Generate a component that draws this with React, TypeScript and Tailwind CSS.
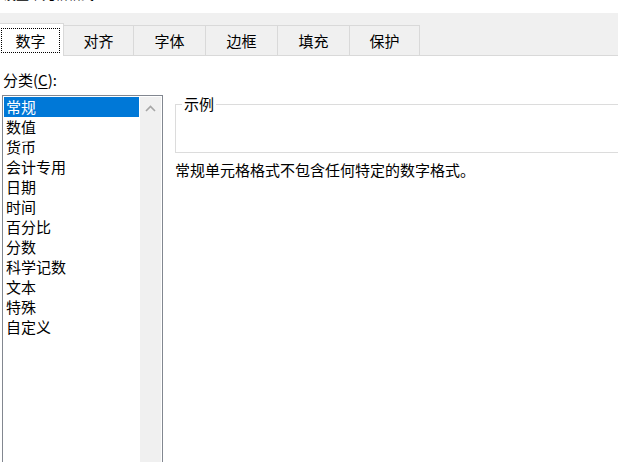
import { useState } from 'react';

const tabs = [
  { label: '数字', w: 'w-[64px]' },
  { label: '对齐', w: 'w-[70px]' },
  { label: '字体', w: 'w-[72px]' },
  { label: '边框', w: 'w-[72px]' },
  { label: '填充', w: 'w-[72px]' },
  { label: '保护', w: 'w-[70px]' },
];

const categories = ['常规', '数值', '货币', '会计专用', '日期', '时间', '百分比', '分数', '科学记数', '文本', '特殊', '自定义'];

export default function App() {
  const [selected, setSelected] = useState(0);

  return (
    <div className="w-[618px] h-[462px] overflow-hidden bg-white text-black font-['Noto_Sans_CJK_SC','Noto_Sans',sans-serif]">
      {/* clipped dialog title */}
      <div className="h-[13px] overflow-hidden pl-[3px]">
        <div className="-mt-[15px] text-[13px] leading-[18px]">设置单元格格式</div>
      </div>

      {/* tab strip */}
      <div className="flex items-end h-[43px] bg-[#f0f0f0] border-b border-[#d9d9d9]">
        {tabs.map((t, i) =>
          i === 0 ? (
            <div key={t.label} className={`${t.w} h-[33px] -mb-px relative z-10 bg-white border-t border-r border-[#d9d9d9] p-[4px_3px_3px_1px]`}>
              <div className="h-full flex items-center justify-center border border-dotted border-black text-[15px] leading-[20px]">
                {t.label}
              </div>
            </div>
          ) : (
            <div key={t.label} className={`${t.w} h-[30px] flex items-center justify-center border-t border-r border-[#d9d9d9] text-[15px] leading-[20px]`}>
              {t.label}
            </div>
          )
        )}
      </div>

      {/* body */}
      <div className="pt-[14px]">
        <div className="pl-[3px] text-[15px] leading-[20px]">
          分类(<span className="underline underline-offset-2">C</span>):
        </div>

        <div className="flex mt-[4px]">
          {/* category list */}
          <div className="ml-[2px] mt-px w-[161px] h-[400px] flex border border-[#828790] p-px">
            <div className="w-[136px] flex flex-col">
              {categories.map((c, i) => (
                <div
                  key={c}
                  onClick={() => setSelected(i)}
                  className={`h-[20px] pl-[2px] text-[15px] leading-[20px] ${i === selected ? 'bg-[#0078d7] text-white' : ''}`}
                >
                  {c}
                </div>
              ))}
            </div>
            <div className="ml-px w-[21px] bg-[#f0f0f0] flex justify-center pt-[8px]">
              <svg width="11" height="7" viewBox="0 0 11 7">
                <polyline points="1,6 5.5,1.5 10,6" fill="none" stroke="#a6a6a6" strokeWidth="1.6" />
              </svg>
            </div>
          </div>

          {/* sample and description */}
          <div className="ml-[12px] flex flex-col">
            <fieldset className="w-[460px] h-[59px] border border-[#dcdcdc] px-[6px]">
              <legend className="px-[2px] text-[15px] leading-[20px]">示例</legend>
            </fieldset>
            <div className="mt-[7px] text-[15px] leading-[20px]">常规单元格格式不包含任何特定的数字格式。</div>
          </div>
        </div>
      </div>
    </div>
  );
}
